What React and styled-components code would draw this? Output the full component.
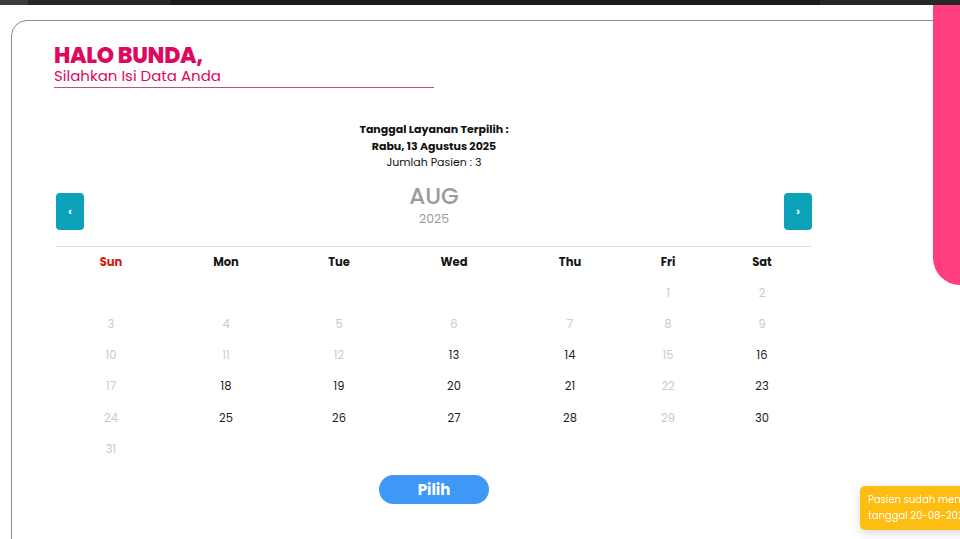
import React from 'react';
import styled, { createGlobalStyle } from 'styled-components';

const GlobalStyle = createGlobalStyle`
  html, body {
    margin: 0;
    padding: 0;
    background: #ffffff;
    overflow: hidden;
    font-family: 'Poppins', 'Open Sans', 'Noto Sans', sans-serif;
  }
`;

const TopBar = styled.div`
  height: 5px;
  background: #26262b;
  display: flex;
  align-items: stretch;
  .tab {
    width: 28px;
    background: #3a3a40;
  }
  .url {
    margin-left: 142px;
    width: 650px;
    background: #1b1b1f;
  }
`;

const PinkStrip = styled.div`
  position: absolute;
  top: 5px;
  right: 0;
  width: 27px;
  height: 280px;
  background: #ff3d7f;
  border-bottom-left-radius: 44px;
  z-index: 2;
`;

const Page = styled.div`
  padding: 15px 0 0 11px;
`;

const Card = styled.div`
  width: 1000px;
  height: 600px;
  border: 1px solid #8c8c8c;
  border-radius: 16px 16px 0 0;
  padding: 22px 0 0 42px;
  box-sizing: border-box;
`;

const Greeting = styled.div`
  width: 380px;
  border-bottom: 1px solid #c24d86;
  padding-bottom: 3px;
  color: #db0a5f;
  h1 {
    margin: 0;
    font-size: 22px;
    font-weight: 800;
    line-height: 25px;
    letter-spacing: -0.3px;
  }
  p {
    margin: 0;
    font-size: 15px;
    line-height: 16px;
  }
`;

const Calendar = styled.div`
  width: 756px;
  margin: 33px 0 0 2px;
`;

const Selected = styled.div`
  text-align: center;
  font-size: 11px;
  line-height: 16.5px;
  color: #111;
  strong {
    display: block;
    font-weight: 700;
  }
`;

const NavRow = styled.div`
  display: flex;
  align-items: flex-start;
  justify-content: space-between;
  margin-top: 12px;
  padding-bottom: 16px;
  border-bottom: 1px solid #cfe6ea;
`;

const NavButton = styled.button`
  width: 28px;
  height: 37px;
  margin-top: 10px;
  border: none;
  border-radius: 4px;
  background: #0ba2b9;
  color: #e8f8fb;
  font-size: 12px;
  font-weight: 700;
  font-family: inherit;
  padding: 0;
  cursor: pointer;
`;

const MonthLabel = styled.div`
  text-align: center;
  color: #9b9b9b;
  .month {
    font-size: 23px;
    font-weight: 500;
    line-height: 27px;
  }
  .year {
    font-size: 12.5px;
    line-height: 18px;
  }
`;

const Grid = styled.div`
  display: grid;
  grid-template-columns: 110fr 120fr 106fr 124fr 108fr 88fr 100fr;
  grid-auto-rows: 31.2px;
  align-items: center;
`;

const DayName = styled.div`
  text-align: center;
  font-size: 11.5px;
  font-weight: 700;
  color: ${(p) => (p.$weekend ? '#d71616' : '#151515')};
`;

const DateCell = styled.div`
  text-align: center;
  font-size: 11.5px;
  color: ${(p) => (p.$open ? '#1c1c1c' : '#cacaca')};
`;

const Actions = styled.div`
  display: flex;
  justify-content: center;
  margin-top: 10px;
`;

const PickButton = styled.button`
  width: 110px;
  height: 29px;
  border: none;
  border-radius: 15px;
  background: #3f97f6;
  color: #ffffff;
  font-family: inherit;
  font-size: 15px;
  font-weight: 700;
  cursor: pointer;
`;

const Toast = styled.div`
  position: fixed;
  left: 860px;
  top: 486px;
  width: 240px;
  padding: 6px 8px;
  box-sizing: border-box;
  background: #fdbd13;
  color: #ffffff;
  font-size: 10px;
  line-height: 16px;
  border-radius: 5px;
  box-shadow: 0 3px 10px rgba(0, 0, 0, 0.15);
  white-space: nowrap;
`;

const days = ['Sun', 'Mon', 'Tue', 'Wed', 'Thu', 'Fri', 'Sat'];
const openDates = [13, 14, 16, 18, 19, 20, 21, 23, 25, 26, 27, 28, 30];
const firstWeekday = 5; // 1 Aug 2025 is a Friday

export default function App() {
  const cells = [];
  for (let i = 0; i < firstWeekday; i++) cells.push(null);
  for (let d = 1; d <= 31; d++) cells.push(d);

  return (
    <>
      <GlobalStyle />
      <TopBar>
        <div className="tab" />
        <div className="url" />
      </TopBar>
      <PinkStrip />
      <Page>
        <Card>
          <Greeting>
            <h1>HALO BUNDA,</h1>
            <p>Silahkan Isi Data Anda</p>
          </Greeting>
          <Calendar>
            <Selected>
              <strong>Tanggal Layanan Terpilih :</strong>
              <strong>Rabu, 13 Agustus 2025</strong>
              Jumlah Pasien : 3
            </Selected>
            <NavRow>
              <NavButton>‹</NavButton>
              <MonthLabel>
                <div className="month">AUG</div>
                <div className="year">2025</div>
              </MonthLabel>
              <NavButton>›</NavButton>
            </NavRow>
            <Grid>
              {days.map((d) => (
                <DayName key={d} $weekend={d === 'Sun'}>
                  {d}
                </DayName>
              ))}
              {cells.map((d, i) => (
                <DateCell key={i} $open={openDates.includes(d)}>
                  {d}
                </DateCell>
              ))}
            </Grid>
            <Actions>
              <PickButton>Pilih</PickButton>
            </Actions>
          </Calendar>
        </Card>
      </Page>
      <Toast>
        Pasien sudah memiliki jadwal pada
        <br />
        tanggal 20-08-2025
      </Toast>
    </>
  );
}
